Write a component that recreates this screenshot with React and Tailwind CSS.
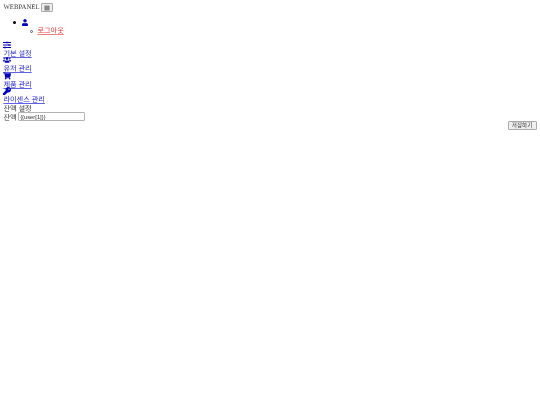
import { FaBars, FaKey, FaShoppingCart, FaSlidersH, FaUser, FaUsers } from "react-icons/fa";

const menu = [
  { label: "기본 설정", Icon: FaSlidersH },
  { label: "유저 관리", Icon: FaUsers },
  { label: "제품 관리", Icon: FaShoppingCart },
  { label: "라이센스 관리", Icon: FaKey },
];

const App = () => {
  return (
    <div className="min-h-[405px] bg-white p-[3.4px] text-[7.2px] leading-[7.7px] text-[#333] blur-[0.3px] [text-rendering:geometricPrecision] font-['Liberation_Serif','Noto_Sans_CJK_KR',serif]">
      {/* top bar */}
      <div className="flex items-center h-[9px]">
        <span className="text-[6.75px]">WEBPANEL</span>
        <button className="ml-[1.5px] flex items-center justify-center w-[12px] h-[9px] bg-[#efefef] border border-[#aaa] rounded-[1px] text-[#222]">
          <FaBars className="w-[6px] h-[6px]" />
        </button>
      </div>

      {/* user menu */}
      <div className="mt-[6px] pl-[10px] h-[8px] flex items-center gap-[6px]">
        <span className="w-[2.5px] h-[2.5px] rounded-full bg-black" />
        <FaUser className="w-[6px] h-[7px] text-[#0000c8]" />
      </div>
      <div className="mt-[1.5px] pl-[27px] flex items-center gap-[4px]">
        <span className="w-[3px] h-[3px] rounded-full border-[0.5px] border-[#555]" />
        <a href="#" className="underline decoration-[#f08080] text-[#e8383c]">로그아웃</a>
      </div>

      {/* side menu */}
      <div className="mt-[5px]">
        {menu.map(({ label, Icon }) => (
          <div key={label} className="h-[15.6px]">
            <Icon className="w-[8px] h-[8px] text-[#0000c8]" />
            <a href="#" className="block mt-[2px] underline decoration-[#6060e8] text-[#2424e0]">{label}</a>
          </div>
        ))}
      </div>

      <div className="mt-[4.5px] leading-[4.7px]">잔액 설정</div>
      <div className="flex items-start">
        <label className="mt-[2.5px] leading-[6.5px]">잔액</label>
        <input
          readOnly
          value="{{user[1]}}"
          className="ml-[1.5px] w-[67px] h-[9px] px-[1px] bg-white border border-[#b4b4b4] rounded-[1px] text-[5.8px] text-[#333] font-['Liberation_Sans',sans-serif]"
        />
      </div>

      <div className="flex justify-end">
        <button className="w-[29px] h-[9px] flex items-center justify-center bg-[#efefef] border border-[#aaa] rounded-[1px] text-[5.6px] text-[#333] font-['Noto_Sans_CJK_KR',sans-serif]">
          저장하기
        </button>
      </div>
    </div>
  );
};

export default App;
